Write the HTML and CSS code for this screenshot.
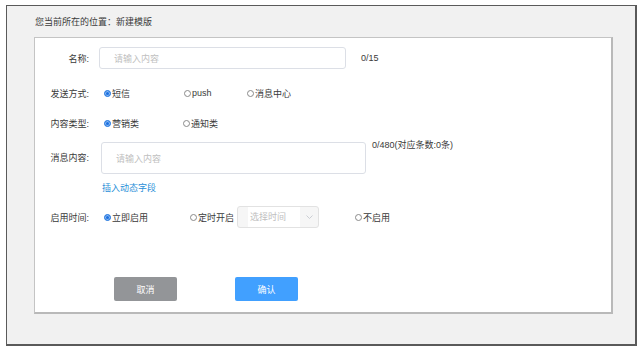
FILE: index.html
```html
<!DOCTYPE html>
<html lang="zh-CN">
<head>
	<meta charset="UTF-8">
	<title>新建模版</title>
	<link rel="stylesheet" href="styles.css">
</head>
<body>
<div class="frame">
	<p class="crumb">您当前所在的位置：新建模版</p>

	<div class="panel">
		<!-- 名称 -->
		<div class="row row-name">
			<span class="label">名称:</span>
			<div class="input name-input">请输入内容</div>
			<span class="count">0/15</span>
		</div>

		<!-- 发送方式 -->
		<div class="row row-radio">
			<span class="label">发送方式:</span>
			<div class="radios">
				<label class="opt w80"><i class="dot checked"></i>短信</label>
				<label class="opt w63"><i class="dot"></i>push</label>
				<label class="opt"><i class="dot"></i>消息中心</label>
			</div>
		</div>

		<!-- 内容类型 -->
		<div class="row row-radio">
			<span class="label">内容类型:</span>
			<div class="radios">
				<label class="opt w79"><i class="dot checked"></i>营销类</label>
				<label class="opt"><i class="dot"></i>通知类</label>
			</div>
		</div>

		<!-- 消息内容 -->
		<div class="row row-content">
			<span class="label">消息内容:</span>
			<div class="input textarea">请输入内容</div>
			<span class="count count-top">0/480(对应条数:0条)</span>
		</div>
		<div class="row row-link">
			<a href="#" class="link">插入动态字段</a>
		</div>

		<!-- 启用时间 -->
		<div class="row row-time">
			<span class="label">启用时间:</span>
			<div class="radios">
				<label class="opt w86"><i class="dot checked"></i>立即启用</label>
				<label class="opt"><i class="dot"></i>定时开启</label>
				<div class="select">
					<span class="select-text">选择时间</span>
					<svg class="chevron" width="7" height="4" viewBox="0 0 7 4"><polyline points="0.5,0.5 3.5,3.5 6.5,0.5" fill="none" stroke="#c0c4cc" stroke-width="0.8"/></svg>
				</div>
				<label class="opt"><i class="dot"></i>不启用</label>
			</div>
		</div>

		<div class="actions">
			<a href="#" class="btn btn-cancel">取消</a>
			<a href="#" class="btn btn-ok">确认</a>
		</div>
	</div>
</div>
</body>
</html>
```

FILE: styles.css
```css
* {
    margin: 0;
    padding: 0;
    box-sizing: border-box;
}

body {
    background: #fff;
    font-family: 'Liberation Sans', 'Noto Sans CJK SC', sans-serif;
    font-size: 9px;
    color: #3a3a3a;
}

.frame {
    margin: 5px 4px 0 6px;
    height: 341px;
    background: #f1f1f1;
    border: 1px solid #5a5a5a;
    border-right-width: 2px;
    border-bottom-width: 2px;
}

.crumb {
    padding: 11px 0 0 28px;
    height: 31px;
    line-height: 10px;
}

.panel {
    margin-left: 27px;
    width: 579px;
    height: 277px;
    background: #fff;
    border: 1px solid #c4c4c4;
    border-right: 2px solid #b9b9b9;
    border-bottom: 2px solid #b9b9b9;
}

.row {
    display: flex;
    align-items: center;
}

.label {
    width: 54px;
    text-align: right;
    flex-shrink: 0;
}

.input {
    border: 1px solid #dcdfe6;
    border-radius: 3px;
    color: #bfbfbf;
    padding-left: 14px;
    display: flex;
    align-items: center;
}

.row-name {
    margin-top: 9px;
    height: 22px;
}

.name-input {
    margin-left: 10px;
    width: 247px;
    height: 22px;
}

.count {
    margin-left: 15px;
}

.row-radio {
    height: 30px;
}

.row-name + .row-radio {
    margin-top: 9px;
}

.radios {
    display: flex;
    align-items: center;
    margin-left: 15px;
}

.opt {
    display: inline-flex;
    align-items: center;
    flex-shrink: 0;
}

.w63 { width: 63px; }
.w79 { width: 79px; }
.w80 { width: 80px; }
.w86 { width: 86px; }

.dot {
    width: 7px;
    height: 7px;
    border: 1px solid #8a8a8a;
    border-radius: 50%;
    margin-right: 1px;
    background: #fff;
}

.dot.checked {
    border-color: #2f7fe0;
    background: #1a6fe0;
    box-shadow: inset 0 0 0 1px #8ab8f2;
}

.row-content {
    margin-top: 4px;
    align-items: flex-start;
}

.row-content .label {
    line-height: 32px;
}

.textarea {
    margin-left: 12px;
    width: 265px;
    height: 32px;
}

.count-top {
    margin-left: 6px;
    margin-top: -4px;
}

.row-link {
    margin-top: 6px;
    height: 14px;
    padding-left: 67px;
}

.link {
    color: #2a8fd8;
    text-decoration: none;
}

.row-time {
    margin-top: 12px;
    height: 22px;
}

.select {
    margin-left: 3px;
    width: 82px;
    height: 22px;
    border: 1px solid #e2e2e2;
    border-radius: 3px;
    background: #f6f6f6;
    display: flex;
    align-items: center;
    padding-left: 10px;
    margin-right: 36px;
}

.select-text {
    background: #fff;
    color: #c0c0c0;
    width: 52px;
    height: 20px;
    line-height: 20px;
    padding-left: 2px;
}

.chevron {
    margin-left: 6px;
}

.actions {
    display: flex;
    margin-top: 49px;
    padding-left: 79px;
    gap: 58px;
}

.btn {
    width: 63px;
    height: 24px;
    border-radius: 2px;
    color: #fff;
    text-decoration: none;
    display: flex;
    align-items: center;
    justify-content: center;
}

.btn-cancel {
    background: #939598;
}

.btn-ok {
    background: #41a0ff;
}
```
